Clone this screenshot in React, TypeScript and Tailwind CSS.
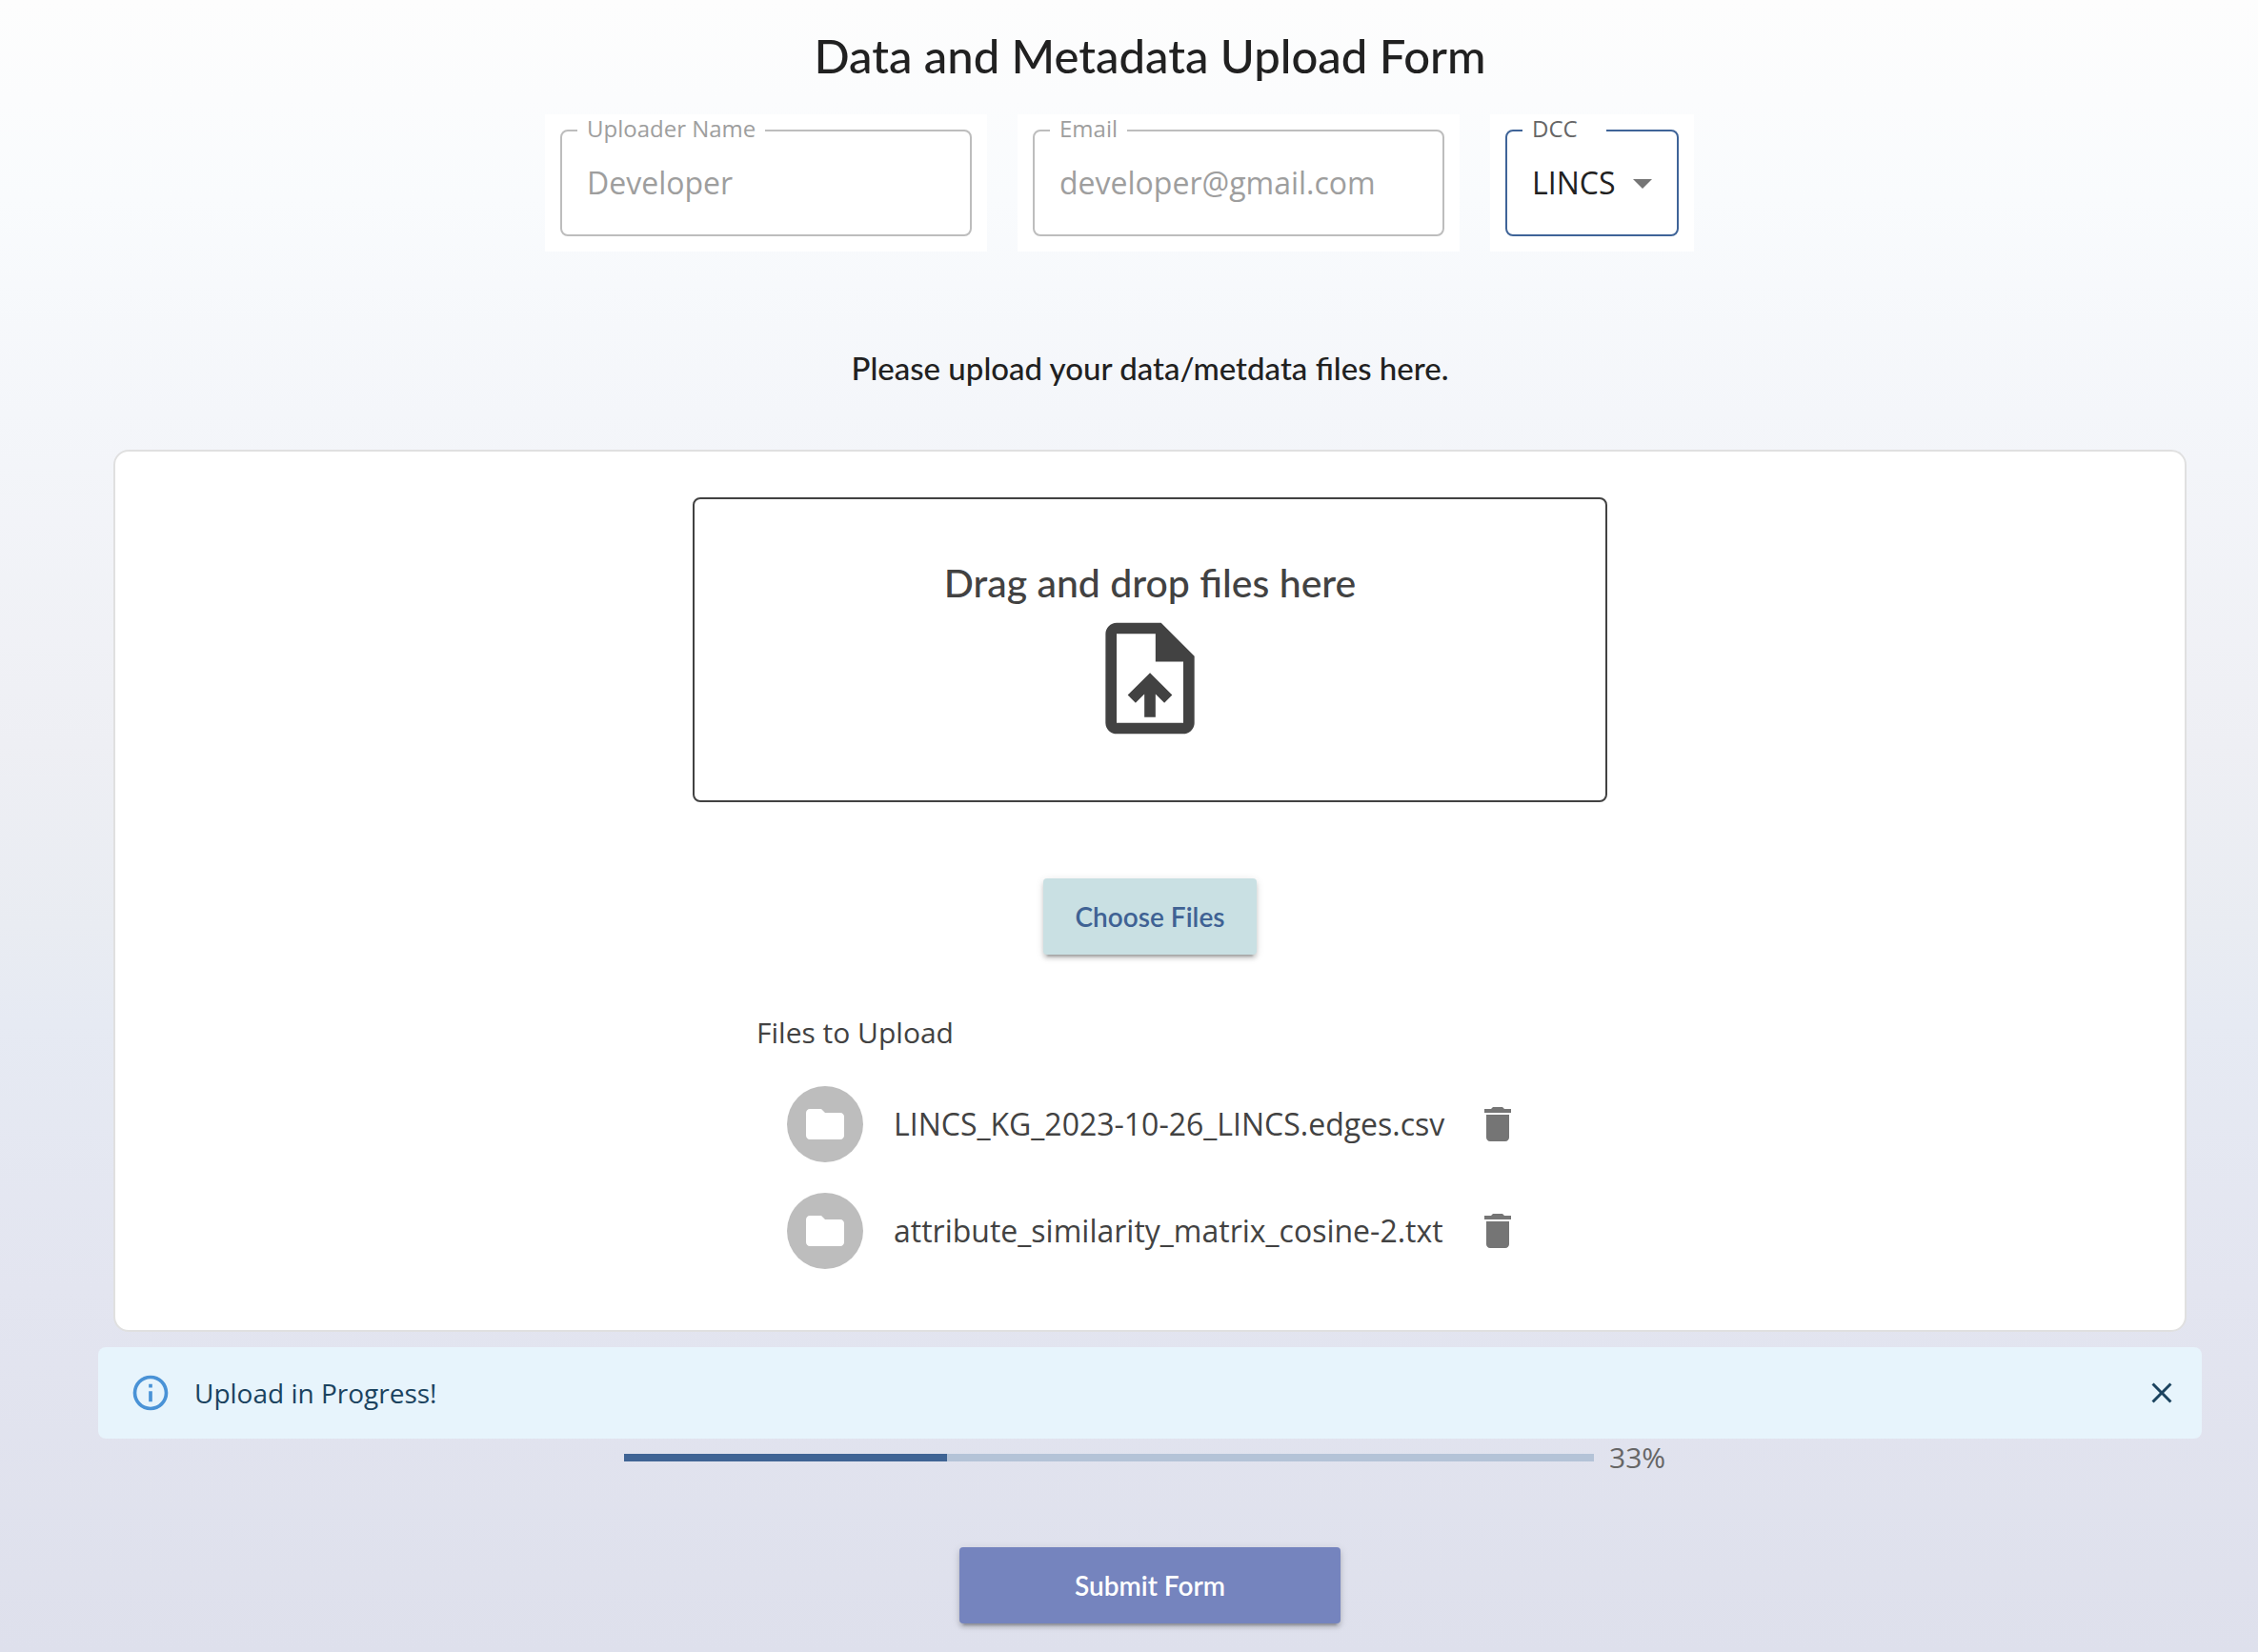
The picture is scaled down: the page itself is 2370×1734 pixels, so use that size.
import { useId, type ReactNode } from "react";

const files = [
  "LINCS_KG_2023-10-26_LINCS.edges.csv",
  "attribute_similarity_matrix_cosine-2.txt",
];

const filesDone = 1;
const filesTotal = 3;
const progress = (filesDone / filesTotal) * 100;

function Icon({ d, className }: { d: string; className: string }) {
  return (
    <svg viewBox="0 0 24 24" fill="currentColor" aria-hidden="true" className={className}>
      <path d={d} />
    </svg>
  );
}

const icons = {
  upload:
    "M14 2H6c-1.1 0-1.99.9-1.99 2L4 20c0 1.1.89 2 1.99 2H18c1.1 0 2-.9 2-2V8l-6-6zm4 18H6V4h7v5h5v11zM8 15.01l1.41 1.41L11 14.84V19h2v-4.16l1.59 1.59L16 15.01 12.01 11 8 15.01z",
  folder: "M10 4H4c-1.1 0-1.99.9-1.99 2L2 18c0 1.1.9 2 2 2h16c1.1 0 2-.9 2-2V8c0-1.1-.9-2-2-2h-8l-2-2z",
  trash: "M6 19c0 1.1.9 2 2 2h8c1.1 0 2-.9 2-2V7H6v12zM19 4h-3.5l-1-1h-5l-1 1H5v2h14V4z",
  info: "M11,9H13V7H11M12,20C7.59,20 4,16.41 4,12C4,7.59 7.59,4 12,4C16.41,4 20,7.59 20,12C20,16.41 16.41,20 12,20M12,2A10,10 0 0,0 2,12A10,10 0 0,0 12,22A10,10 0 0,0 22,12A10,10 0 0,0 12,2M11,17H13V11H11V17Z",
  close:
    "M19 6.41L17.59 5 12 10.59 6.41 5 5 6.41 10.59 12 5 17.59 6.41 19 12 13.41 17.59 19 19 17.59 13.41 12z",
  arrow: "M7 10l5 5 5-5z",
};

function Outline({
  label,
  id,
  box,
  legend,
  children,
}: {
  label: string;
  id: string;
  box: string;
  legend: string;
  children: ReactNode;
}) {
  return (
    <div className="bg-white px-4 pb-4">
      <fieldset className={`rounded-lg border-2 ${box}`}>
        <legend className={`ml-4 h-[34px] px-[10px] text-[24px] leading-[30px] ${legend}`}>
          <label htmlFor={id}>{label}</label>
        </legend>
        {children}
      </fieldset>
    </div>
  );
}

function TextField({ label, type, value }: { label: string; type: string; value: string }) {
  const id = useId();
  return (
    <Outline label={label} id={id} box="w-[432px] border-[#bdbdbd]" legend="text-[#9e9e9e]">
      <input
        id={id}
        type={type}
        defaultValue={value}
        disabled
        className="mb-4 block h-[76px] w-full bg-transparent px-[26px] pb-0.5 text-[32px] text-[#9e9e9e]"
      />
    </Outline>
  );
}

function DccSelect() {
  const id = useId();
  return (
    <Outline label="DCC" id={id} box="w-[182px] border-[#3f6498]" legend="w-[88px] text-[#666666]">
      <div className="relative mb-4">
        <select
          id={id}
          defaultValue="LINCS"
          className="block h-[76px] w-full appearance-none bg-transparent pl-[26px] text-[32px] text-[#212121] outline-none"
        >
          <option>LINCS</option>
        </select>
        <Icon
          d={icons.arrow}
          className="pointer-events-none absolute top-[14px] right-3 size-12 text-[#757575]"
        />
      </div>
    </Outline>
  );
}

export default function App() {
  return (
    <div className="min-h-screen bg-[linear-gradient(to_bottom,#fdfdfd,#f9fbfd_12%,#f4f6fa_25%,#eeeff4_45%,#e9ecf2_56%,#e6eaf3_62%,#e3e5f0_78%,#dee0ec)] font-['Open_Sans',sans-serif] text-[#424242]">
      <main className="pt-[26px] pr-[59px] pb-[30px] pl-[103px]">
        <h1 className="text-center font-['Lato',sans-serif] text-[49px] leading-[64px] font-medium text-[#212121]">
          Data and Metadata Upload Form
        </h1>

        <div className="mt-[30px] flex justify-center gap-8 pr-16">
          <TextField label="Uploader Name" type="text" value="Developer" />
          <TextField label="Email" type="email" value="developer@gmail.com" />
          <DccSelect />
        </div>

        <p className="mt-[102px] text-center font-['Lato',sans-serif] text-[33px] leading-10 font-medium text-[#212121]">
          Please upload your data/metdata files here.
        </p>

        <section className="mx-4 mt-[66px] flex flex-col items-center rounded-2xl border-2 border-[#e0e0e0] bg-white py-12">
          <div className="flex h-80 w-[960px] flex-col items-center justify-center rounded-lg border-2 border-[#424242]">
            <p className="font-['Lato',sans-serif] text-[41px] leading-[60px] font-medium">
              Drag and drop files here
            </p>
            <Icon d={icons.upload} className="size-[140px]" />
          </div>

          <button
            type="button"
            className="mt-20 h-20 rounded-[4px] bg-[#c9e0e3] px-[34px] font-['Lato',sans-serif] text-[28px] font-semibold text-[#3f6294] shadow-[0_6px_2px_-4px_rgba(0,0,0,0.2),0_4px_4px_0_rgba(0,0,0,0.14),0_2px_10px_0_rgba(0,0,0,0.12)]"
          >
            Choose Files
          </button>

          <div className="mt-[62px] w-[826px]">
            <h2 className="text-[30px] leading-10">Files to Upload</h2>
            <ul className="mt-5">
              {files.map((name) => (
                <li key={name} className="flex items-center py-4 pr-6 pl-8">
                  <span className="flex size-20 shrink-0 items-center justify-center rounded-full bg-[#bdbdbd] text-white">
                    <Icon d={icons.folder} className="size-12" />
                  </span>
                  <span className="ml-8 grow text-[32px] leading-[48px] whitespace-nowrap">{name}</span>
                  <button type="button" aria-label={`Delete ${name}`} className="text-[#757575]">
                    <Icon d={icons.trash} className="size-12" />
                  </button>
                </li>
              ))}
            </ul>
          </div>
        </section>

        <div role="alert" className="mt-4 flex h-24 items-center rounded-lg bg-[#e7f4fc] pr-6 pl-[33px] text-[#1b435f]">
          <Icon d={icons.info} className="size-11 text-[#4992d6]" />
          <p className="ml-6 grow text-[28px] leading-10">Upload in Progress!</p>
          <button type="button" aria-label="Close">
            <Icon d={icons.close} className="size-9" />
          </button>
        </div>

        <div className="mx-auto flex w-1/2 items-center gap-4">
          <div
            role="progressbar"
            aria-label="Upload progress"
            aria-valuenow={Math.round(progress)}
            aria-valuemin={0}
            aria-valuemax={100}
            className="h-2 grow bg-[#b4c3d7]"
          >
            <div className="h-full bg-[#3f6495]" style={{ width: `${progress}%` }} />
          </div>
          <span className="w-[70px] text-[30px] leading-10 text-[#666666]">{Math.round(progress)}%</span>
        </div>

        <div className="mt-[74px] flex justify-center">
          <button
            type="submit"
            className="h-20 w-[400px] rounded-[4px] bg-[#7584be] font-['Lato',sans-serif] text-[28px] font-semibold text-white shadow-[0_6px_2px_-4px_rgba(0,0,0,0.2),0_4px_4px_0_rgba(0,0,0,0.14),0_2px_10px_0_rgba(0,0,0,0.12)]"
          >
            Submit Form
          </button>
        </div>
      </main>
    </div>
  );
}
